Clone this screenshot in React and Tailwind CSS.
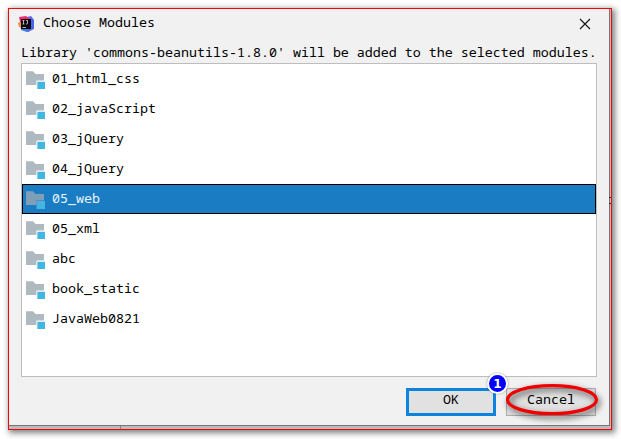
const modules = [
  "01_html_css",
  "02_javaScript",
  "03_jQuery",
  "04_jQuery",
  "05_web",
  "05_xml",
  "abc",
  "book_static",
  "JavaWeb0821",
];

function FolderIcon({ selected }) {
  return (
    <svg width="20" height="20" viewBox="0 0 20 20" className="shrink-0">
      <path d="M0 2.3H7L9.5 5H18V11.5H10.5V16H0Z" fill={selected ? "#7f9fb8" : "#afb9c0"} />
      <path d="M10.5 12H19V20H10.5Z" fill={selected ? "#5aa8d6" : "#d8edf6"} />
      <path d="M11.5 13H19V20H11.5Z" fill="#40b6e0" />
    </svg>
  );
}

function AppLogo() {
  return (
    <svg width="16" height="16" viewBox="0 0 16 16" className="mt-[-2px] shrink-0">
      <defs>
        <linearGradient id="right" x1="0" y1="0" x2="1" y2="1">
          <stop offset="0" stopColor="#b34be8" />
          <stop offset="0.6" stopColor="#3b6cf0" />
          <stop offset="1" stopColor="#7555dc" />
        </linearGradient>
      </defs>
      <path d="M9 1L13 0L16 4V13L10 16L5 14Z" fill="url(#right)" />
      <path d="M1 1L8 0L12 3L9 10H3L0 8L2 6Z" fill="#f52b72" />
      <path d="M0 7L3 6L5 13L1 11Z" fill="#f99148" />
      <path d="M3 12L8 12L12 15L9 16L3 14Z" fill="#3d7bea" />
      <path d="M3 3H13V13H3Z" fill="#080808" />
      <path d="M4.5 4.5H6.5M5.5 4.5V8M4.5 8H6.5M8 4.5H9.5V7.5Q9.5 8.3 8 8M4.5 11.5H8" stroke="#ddd" strokeWidth="0.8" fill="none" />
    </svg>
  );
}

export default function App() {
  return (
    <div className="h-[439px] w-[621px] overflow-hidden bg-white p-2 font-['Noto_Sans_Mono','DejaVu_Sans_Mono',monospace] text-[13.33px] text-black">
      <div className="relative flex h-[422px] w-[604px] flex-col border border-[#ff0000] bg-[#b8bebb] shadow-[2px_2px_6px_1px_rgba(0,0,0,0.5)]">
        <div className="flex h-[417px] w-[601px] flex-col border-r border-b border-[#6f7774] bg-[#f1f1f1]">
          <div className="flex h-[32px] items-center pl-[9px] pr-[18px]">
            <AppLogo />
            <span className="ml-[9px] mt-[-7px] grow leading-[20px]">Choose Modules</span>
            <svg width="12" height="12" viewBox="0 0 12 12" className="mt-[-3px]">
              <path d="M1 1L11 11M11 1L1 11" stroke="#151515" strokeWidth="1.15" />
            </svg>
          </div>
          <p className="h-[22px] whitespace-nowrap pl-3 leading-[22px]">
            Library 'commons-beanutils-1.8.0' will be added to the selected modules.
          </p>
          <ul className="ml-3 h-[314px] w-[576px] border border-[#bdbdbd] bg-white">
            {modules.map((name) => {
              const selected = name === "05_web";
              return (
                <li
                  key={name}
                  className={
                    selected
                      ? "flex h-[30px] items-center border border-black bg-[#1a7dc4] pl-[3px] text-[#e8f2fa]"
                      : "flex h-[30px] items-center border border-transparent pl-[3px]"
                  }
                >
                  <FolderIcon selected={selected} />
                  <span className="ml-[6px] pb-[2px] leading-[26px]">{name}</span>
                </li>
              );
            })}
          </ul>
          <div className="mt-[11px] flex justify-end gap-[10px] pr-[13px]">
            <button className="h-[28px] w-[90px] border-3 border-[#0a84df] bg-[#e1e1e1] pb-[6px] leading-[16px]">OK</button>
            <button className="h-[28px] w-[90px] border border-[#adadad] bg-[#e1e1e1] pb-[6px] leading-[20px]">Cancel</button>
          </div>
        </div>
        <div className="absolute bottom-0 left-[111px] h-[3px] w-px bg-[#7c8582]" />
        <div className="absolute right-0 top-[188px] h-[7px] w-[2px] border-y border-[#16374f]" />
        <svg width="110" height="50" viewBox="0 0 110 50" className="absolute left-[488px] top-[365px] overflow-visible drop-shadow-[2px_3px_3px_rgba(0,0,0,0.7)]">
          <ellipse cx="55" cy="25.7" rx="44.5" ry="14" fill="none" stroke="#f00000" strokeWidth="3.2" />
        </svg>
        <div className="absolute left-[478px] top-[364px] flex size-[21px] items-center justify-center rounded-full border-2 border-white bg-[#0000ff] font-['DejaVu_Sans',sans-serif] text-[12px] leading-none font-bold tracking-normal text-white shadow-[0_0_2px_rgba(0,0,0,0.45)]">
          1
        </div>
      </div>
    </div>
  );
}
